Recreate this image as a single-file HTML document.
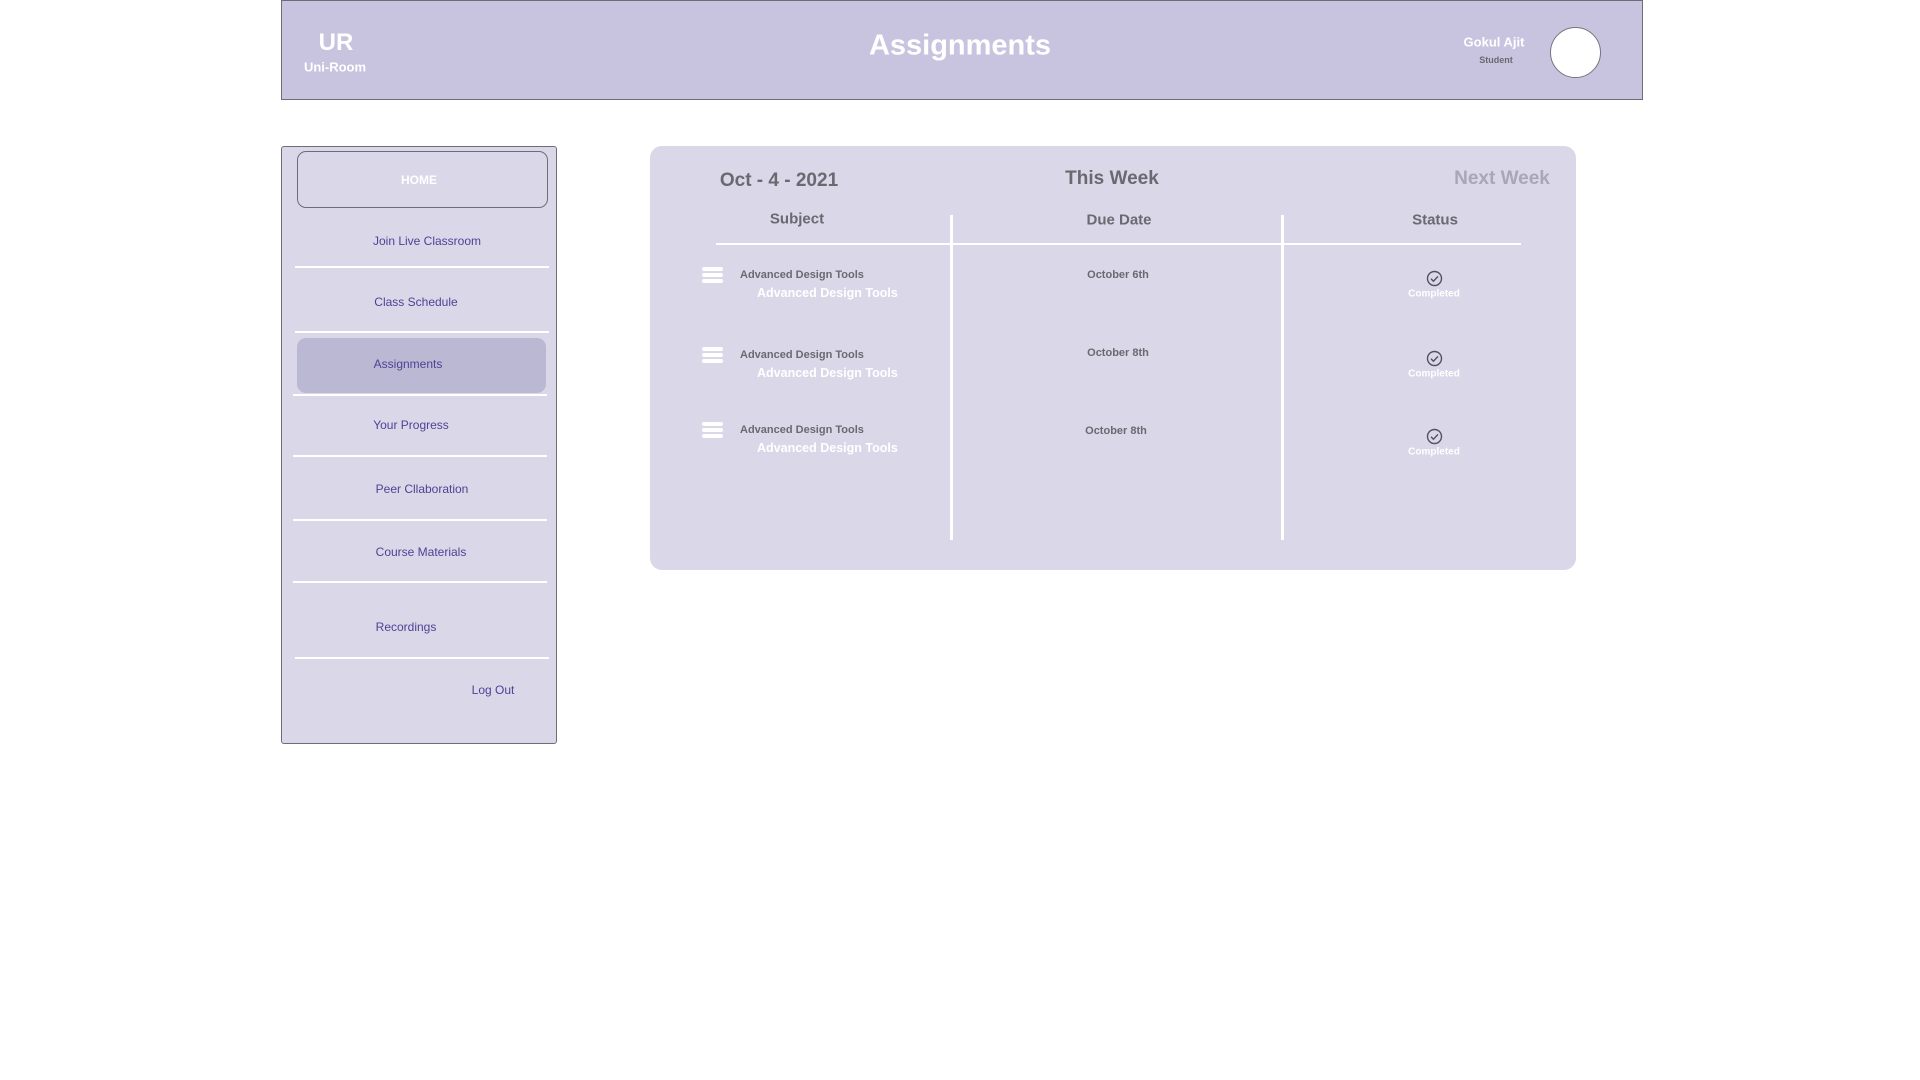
<!DOCTYPE html>
<html><head><meta charset="utf-8"><style>
*{margin:0;padding:0;box-sizing:border-box}
body{width:1920px;height:1080px;background:#fff;position:relative;overflow:hidden;font-family:"Liberation Sans",sans-serif;font-weight:bold}
.a{position:absolute;white-space:nowrap}
.c{transform:translate(-50%,-50%)}
.l{transform:translateY(-50%)}
.side{color:#4f4294;font-size:12px;font-weight:normal}
.ln{position:absolute;height:2px;background:#fff}
.g{color:#6b6870}
</style></head><body>
<div class="a" style="left:281px;top:0;width:1362px;height:100px;background:#c8c4df;border:1px solid #6f6c78"></div>
<div class="a c" style="left:336px;top:43px;color:#fff;font-size:24px">UR</div>
<div class="a c" style="left:335px;top:67px;color:#fff;font-size:13px">Uni-Room</div>
<div class="a c" style="left:960px;top:46px;color:#fff;font-size:29px">Assignments</div>
<div class="a c" style="left:1494px;top:42px;color:#fff;font-size:13px">Gokul Ajit</div>
<div class="a c" style="left:1496px;top:60px;color:#6b6870;font-size:9px">Student</div>
<div class="a" style="left:1550px;top:27px;width:51px;height:51px;border-radius:50%;background:#fff;border:1px solid #77737f"></div>

<div class="a" style="left:281px;top:146px;width:276px;height:598px;background:#dad7e9;border:1px solid #6f6c78;border-radius:3px"></div>
<div class="a" style="left:297px;top:151px;width:251px;height:57px;border:1px solid #6f6c78;border-radius:9px"></div>
<div class="a c" style="left:419px;top:180px;color:#fff;font-size:12px">HOME</div>
<div class="a" style="left:297px;top:338px;width:249px;height:55px;background:#bbb8d3;border-radius:9px"></div>
<div class="a c side" style="left:427px;top:241px">Join Live Classroom</div>
<div class="ln" style="left:295px;top:266px;width:254px"></div>
<div class="a c side" style="left:416px;top:302px">Class Schedule</div>
<div class="ln" style="left:295px;top:331px;width:254px"></div>
<div class="a c side" style="left:408px;top:364px">Assignments</div>
<div class="ln" style="left:293px;top:394px;width:254px"></div>
<div class="a c side" style="left:411px;top:425px">Your Progress</div>
<div class="ln" style="left:293px;top:455px;width:254px"></div>
<div class="a c side" style="left:422px;top:489px">Peer Cllaboration</div>
<div class="ln" style="left:293px;top:519px;width:254px"></div>
<div class="a c side" style="left:421px;top:552px">Course Materials</div>
<div class="ln" style="left:293px;top:581px;width:254px"></div>
<div class="a c side" style="left:406px;top:627px">Recordings</div>
<div class="ln" style="left:295px;top:657px;width:254px"></div>
<div class="a c side" style="left:493px;top:690px">Log Out</div>

<div class="a" style="left:650px;top:146px;width:926px;height:424px;background:#dad7e9;border-radius:12px"></div>
<div class="a c g" style="left:779px;top:181px;font-size:19px">Oct - 4 - 2021</div>
<div class="a c g" style="left:1112px;top:179px;font-size:19px">This Week</div>
<div class="a c" style="left:1502px;top:179px;font-size:19px;color:#a9a6b8">Next Week</div>
<div class="a c g" style="left:797px;top:219px;font-size:15px">Subject</div>
<div class="a c g" style="left:1119px;top:220px;font-size:15px">Due Date</div>
<div class="a c g" style="left:1435px;top:220px;font-size:15px">Status</div>
<div class="ln" style="left:716px;top:243px;width:805px"></div>
<div class="a" style="left:950px;top:215px;width:3px;height:325px;background:#fff"></div>
<div class="a" style="left:1281px;top:215px;width:3px;height:325px;background:#fff"></div>

<div class="a" style="left:702px;top:267px;width:21px"><div style="height:4px;background:#fff;border-radius:2px;margin-bottom:2px"></div><div style="height:4px;background:#fff;border-radius:2px;margin-bottom:2px"></div><div style="height:4px;background:#fff;border-radius:2px"></div></div>
<div class="a l g" style="left:740px;top:275px;font-size:11px">Advanced Design Tools</div>
<div class="a l" style="left:757px;top:293px;font-size:12.5px;color:#fff">Advanced Design Tools</div>
<div class="a c g" style="left:1118px;top:275px;font-size:11px">October 6th</div>
<svg class="a" style="left:1426px;top:270px" width="17" height="17" viewBox="0 0 17 17"><circle cx="8.5" cy="8.5" r="7" fill="none" stroke="#55525c" stroke-width="1.4"/><path d="M5 8.8l2.4 2.4 4.6-4.8" fill="none" stroke="#55525c" stroke-width="1.4"/></svg>
<div class="a c" style="left:1434px;top:294px;font-size:10px;color:#fff">Completed</div>

<div class="a" style="left:702px;top:347px;width:21px"><div style="height:4px;background:#fff;border-radius:2px;margin-bottom:2px"></div><div style="height:4px;background:#fff;border-radius:2px;margin-bottom:2px"></div><div style="height:4px;background:#fff;border-radius:2px"></div></div>
<div class="a l g" style="left:740px;top:355px;font-size:11px">Advanced Design Tools</div>
<div class="a l" style="left:757px;top:373px;font-size:12.5px;color:#fff">Advanced Design Tools</div>
<div class="a c g" style="left:1118px;top:353px;font-size:11px">October 8th</div>
<svg class="a" style="left:1426px;top:350px" width="17" height="17" viewBox="0 0 17 17"><circle cx="8.5" cy="8.5" r="7" fill="none" stroke="#55525c" stroke-width="1.4"/><path d="M5 8.8l2.4 2.4 4.6-4.8" fill="none" stroke="#55525c" stroke-width="1.4"/></svg>
<div class="a c" style="left:1434px;top:374px;font-size:10px;color:#fff">Completed</div>

<div class="a" style="left:702px;top:422px;width:21px"><div style="height:4px;background:#fff;border-radius:2px;margin-bottom:2px"></div><div style="height:4px;background:#fff;border-radius:2px;margin-bottom:2px"></div><div style="height:4px;background:#fff;border-radius:2px"></div></div>
<div class="a l g" style="left:740px;top:430px;font-size:11px">Advanced Design Tools</div>
<div class="a l" style="left:757px;top:448px;font-size:12.5px;color:#fff">Advanced Design Tools</div>
<div class="a c g" style="left:1116px;top:431px;font-size:11px">October 8th</div>
<svg class="a" style="left:1426px;top:428px" width="17" height="17" viewBox="0 0 17 17"><circle cx="8.5" cy="8.5" r="7" fill="none" stroke="#55525c" stroke-width="1.4"/><path d="M5 8.8l2.4 2.4 4.6-4.8" fill="none" stroke="#55525c" stroke-width="1.4"/></svg>
<div class="a c" style="left:1434px;top:452px;font-size:10px;color:#fff">Completed</div>
</body></html>
